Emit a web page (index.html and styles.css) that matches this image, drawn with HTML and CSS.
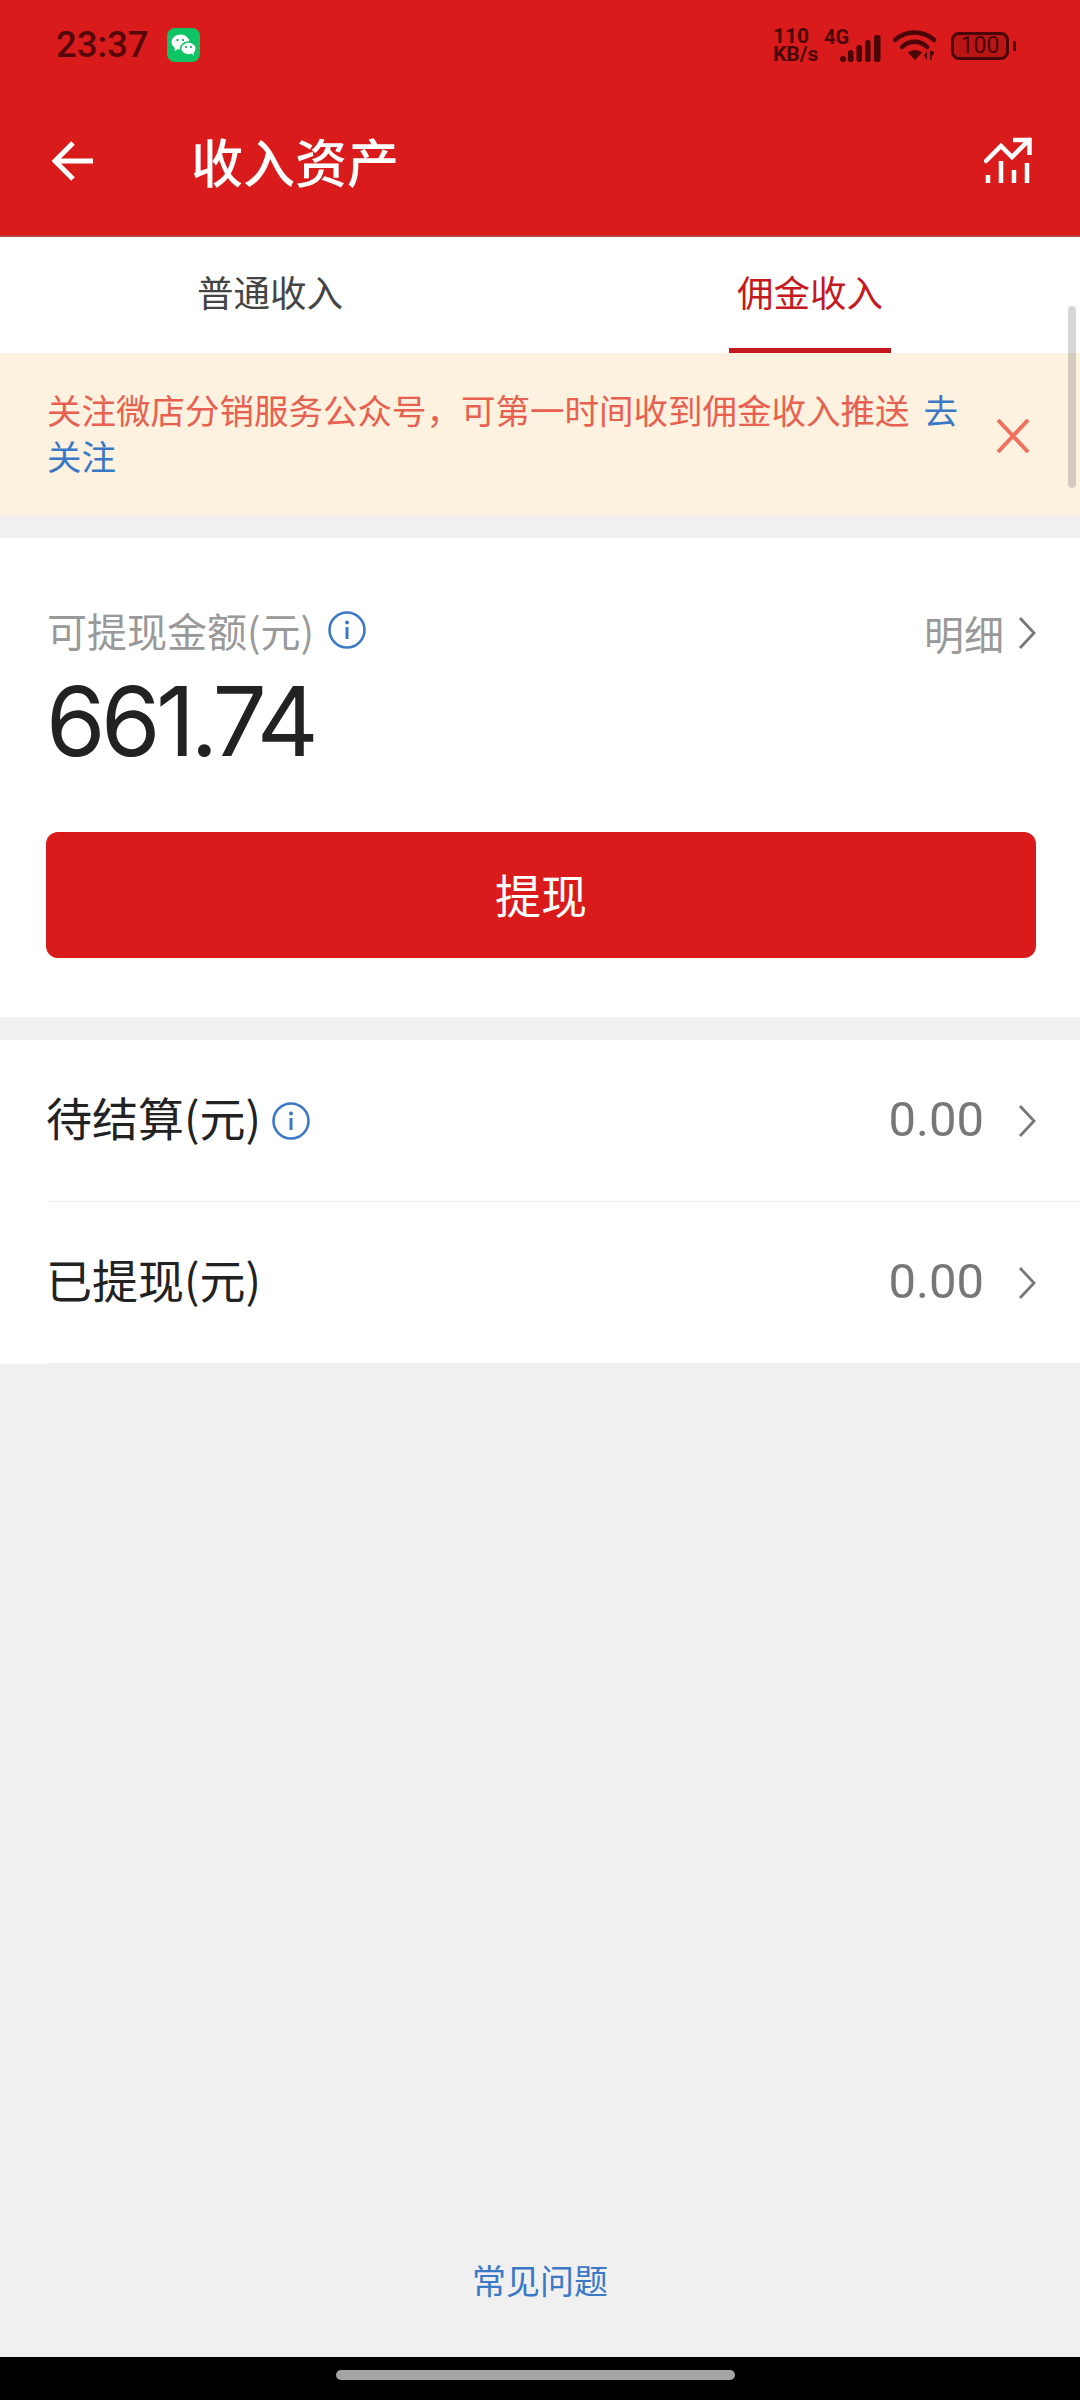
FILE: index.html
```html
<!DOCTYPE html>
<html lang="zh-CN">
<head>
<meta charset="utf-8">
<title>收入资产</title>
<link rel="stylesheet" href="styles.css">
</head>
<body>
<div class="page">
  <header class="head">
    <div class="status">
      <span class="time">23:37</span>
      <svg class="wechat" viewBox="0 0 33 34"><rect width="33" height="34" rx="8" fill="#0fc465"/><ellipse cx="13.5" cy="14" rx="9" ry="7.6" fill="#fff"/><path d="M8 19l-.5 4 4.5-2.500z" fill="#fff"/><ellipse cx="21.500" cy="20.500" rx="7.800" ry="6.500" fill="#fff" stroke="#0fc465" stroke-width="1.500"/><path d="M25 25.500l2 2.500-.3-4z" fill="#fff"/><circle cx="10.500" cy="12" r="1.100" fill="#0a9a50"/><circle cx="16" cy="12" r="1.100" fill="#0a9a50"/><circle cx="19" cy="19" r="1" fill="#0a9a50"/><circle cx="24" cy="19" r="1" fill="#0a9a50"/></svg>
      <div class="spacer"></div>
      <div class="speed"><span>110</span><span>KB/s</span></div>
      <div class="signal">
        <span class="net">4G</span>
        <svg class="bars" viewBox="0 0 42 27"><g fill="#4a0508"><rect x="0" y="21" width="6" height="6" rx="3"/><rect x="8" y="15" width="5.500" height="12" rx="2.500"/><rect x="16.500" y="10" width="5.500" height="17" rx="2.500"/><rect x="25" y="5" width="5.500" height="22" rx="2.500"/><rect x="34" y="0" width="6.500" height="27" rx="2.500"/></g></svg>
      </div>
      <svg class="wifi" viewBox="0 0 44 32"><g fill="none" stroke="#4a0508" stroke-width="4.500" stroke-linecap="round"><path d="M2 11C13 1 30 1 41 11"/><path d="M9 18C16 11 27 11 34 18"/></g><path d="M15 23.500C19 20 25 20 29 23.500L22 31z" fill="#4a0508"/><path d="M34 22l-3 4.500 3 4.500zM37 22h2.500c2 0 2 4.500-.500 4.500H38.500V31H37z" fill="#4a0508"/></svg>
      <div class="battery">
        <span class="bat-body">100</span>
        <span class="bat-nub"></span>
      </div>
    </div>
    <div class="bar">
      <svg class="back" viewBox="0 0 42 42"><path d="M41 21H4M21 3L3 21l18 18" fill="none" stroke="#fff" stroke-width="5"/></svg>
      <h1 class="title">收入资产</h1>
      <svg class="chart" viewBox="0 0 48 48"><g fill="none" stroke="#fff" stroke-width="4.500"><path d="M2 24L17 9l11 11L45 3" stroke-linecap="round"/><path d="M29 3h16.500v15"/><path d="M4 38v8M17 24v22M30 33v13M43 26v20"/></g></svg>
    </div>
  </header>

  <nav class="tabs">
    <div class="tab">普通收入</div>
    <div class="tab tab-on">佣金收入</div>
  </nav>

  <div class="notice">
    <p class="notice-text">关注微店分销服务公众号，可第一时间收到佣金收入推送<a class="link">去关注</a></p>
    <svg class="close" viewBox="0 0 34 34"><path d="M2 1l30 32M32 1L2 33" fill="none" stroke="#f0705f" stroke-width="4"/></svg>
  </div>

  <section class="card">
    <div class="card-top">
      <div class="label">
        <span>可提现金额(元)</span>
        <svg class="info" viewBox="0 0 38 38"><circle cx="19" cy="19" r="17.500" fill="none" stroke="#3b78c6" stroke-width="2.600"/><circle cx="19" cy="11.500" r="2" fill="#3b78c6"/><rect x="17.500" y="16" width="3" height="12" fill="#3b78c6"/></svg>
      </div>
      <div class="detail">
        <span>明细</span>
        <svg class="chev" viewBox="0 0 18 34"><path d="M2 2l14 15L2 32" fill="none" stroke="#777" stroke-width="2.800"/></svg>
      </div>
    </div>
    <div class="amount">661.74</div>
    <button class="cash">提现</button>
  </section>

  <section class="list">
    <div class="row">
      <div class="row-left">
        <span class="row-name">待结算(元)</span>
        <svg class="info" viewBox="0 0 38 38"><circle cx="19" cy="19" r="17.500" fill="none" stroke="#3b78c6" stroke-width="2.600"/><circle cx="19" cy="11.500" r="2" fill="#3b78c6"/><rect x="17.500" y="16" width="3" height="12" fill="#3b78c6"/></svg>
      </div>
      <div class="row-right">
        <span class="val">0.00</span>
        <svg class="chev" viewBox="0 0 18 34"><path d="M2 2l14 15L2 32" fill="none" stroke="#777" stroke-width="2.800"/></svg>
      </div>
    </div>
    <div class="row">
      <div class="row-left"><span class="row-name">已提现(元)</span></div>
      <div class="row-right">
        <span class="val">0.00</span>
        <svg class="chev" viewBox="0 0 18 34"><path d="M2 2l14 15L2 32" fill="none" stroke="#777" stroke-width="2.800"/></svg>
      </div>
    </div>
  </section>

  <div class="fill"></div>
  <a class="faq">常见问题</a>
  <div class="navbar"><span class="pill"></span></div>
  <div class="scroll"></div>
</div>
</body>
</html>
```
FILE: styles.css
```css
* { box-sizing: border-box; margin: 0; padding: 0; }
html, body { width: 1080px; height: 2400px; overflow: hidden; }
body { font-family: "Noto Sans CJK SC", "Noto Sans", sans-serif; background: #f0f0f0; }
.page { position: relative; width: 1080px; height: 2400px; display: flex; flex-direction: column; }

.head { height: 237px; background: #d91b1b; border-bottom: 2px solid #b83c3c; flex: none; }
.status { height: 90px; padding: 0 64px 0 56px; display: flex; align-items: center; color: #4a0508; }
.time { font-family: Roboto, sans-serif; font-size: 36.500px; font-weight: 500; line-height: 90px; width: 111px; color: #550709; }
.wechat { width: 33px; height: 34px; flex: none; }
.spacer { flex: 1; }
.speed { display: flex; flex-direction: column; font-family: Roboto, sans-serif; font-weight: 700; font-size: 21px; line-height: 18px; width: 51px; }
.signal { position: relative; width: 58px; height: 34px; margin-right: 11px; }
.net { position: absolute; left: 0; top: -1px; font-family: Roboto, sans-serif; font-weight: 700; font-size: 20px; line-height: 20px; }
.bars { position: absolute; right: 0; bottom: 0; width: 42px; height: 27px; }
.wifi { width: 44px; height: 32px; margin-right: 14px; flex: none; }
.battery { display: flex; align-items: center; gap: 4px; margin-top: 2px; }
.bat-body { width: 58px; height: 28px; border: 3px solid #4a0508; border-radius: 8px; background: #bb1616; font-family: Roboto, sans-serif; font-size: 23px; line-height: 22px; text-align: center; }
.bat-nub { width: 3px; height: 10px; background: #4a0508; border-radius: 1px; }

.bar { height: 144px; padding: 0 48px 0 52px; display: flex; align-items: center; margin-top: -1px; }
.back { width: 42px; height: 42px; flex: none; }
.title { margin-left: 97px; flex: 1; font-size: 52px; font-weight: 500; line-height: 60px; color: #fff; }
.chart { width: 48px; height: 48px; flex: none; }

.tabs { height: 116px; background: #fff; display: flex; flex: none; }
.tab { flex: 1; text-align: center; font-size: 36.500px; line-height: 110px; color: #444; position: relative; }
.tab-on { color: #c4191f; }
.tab-on::after { content: ""; position: absolute; left: 189px; width: 162px; bottom: 0; height: 5px; background: #c4191f; }

.notice { height: 163px; background: #fdf2df; padding: 33px 0 0 47px; display: flex; flex: none; }
.notice-text { width: 915px; font-size: 34.500px; line-height: 46px; color: #e8604f; }
.link { color: #3b78c6; margin-left: 14px; }
.close { width: 34px; height: 34px; margin: 33px 0 0 34px; flex: none; }

.card { margin-top: 22px; height: 479px; background: #fff; padding: 0 44px 0 46px; flex: none; }
.card-top { height: 120px; padding: 72px 0 0 1px; display: flex; justify-content: space-between; align-items: flex-start; }
.label { display: flex; align-items: center; gap: 14px; font-size: 40px; line-height: 40px; color: #999; }
.detail { display: flex; align-items: center; gap: 14px; font-size: 40px; line-height: 46px; color: #999; }
.chev { width: 18px; height: 34px; flex: none; }
.amount { font-family: Inter, Roboto, sans-serif; font-size: 96px; line-height: 116px; color: #222; letter-spacing: -4.500px; margin-top: 5px; }
.cash { display: block; width: 990px; height: 126px; margin-top: 53px; padding-bottom: 5px; border: 0; border-radius: 12px; background: #d91b1b; color: #fff; font-family: inherit; font-size: 46px; }

.list { margin-top: 23px; background: #fff; flex: none; }
.row { height: 162px; margin-left: 47px; padding-right: 44px; display: flex; justify-content: space-between; align-items: center; border-bottom: 1px solid #eeeeee; }
.row-left { display: flex; align-items: center; gap: 11px; font-size: 46px; color: #222; margin-left: -1px; }
.row-name { padding-bottom: 10px; }
.row-right { display: flex; align-items: center; gap: 34px; }
.val { font-family: Roboto, sans-serif; font-size: 49px; color: #777; padding-bottom: 3px; }

.fill { flex: 1; }
.faq { text-align: center; font-size: 34px; line-height: 46px; color: #3b78c6; margin-bottom: 54px; }
.navbar { height: 43px; background: #000; display: flex; justify-content: center; padding: 13px 0 0 0; flex: none; }
.pill { width: 399px; height: 10px; margin-right: 9px; border-radius: 5px; background: #a5a5a5; }
.scroll { position: absolute; left: 1068px; top: 306px; width: 8px; height: 182px; border-radius: 4px; background: rgba(120,120,120,.3); }

.info { width: 38px; height: 38px; flex: none; }
```
